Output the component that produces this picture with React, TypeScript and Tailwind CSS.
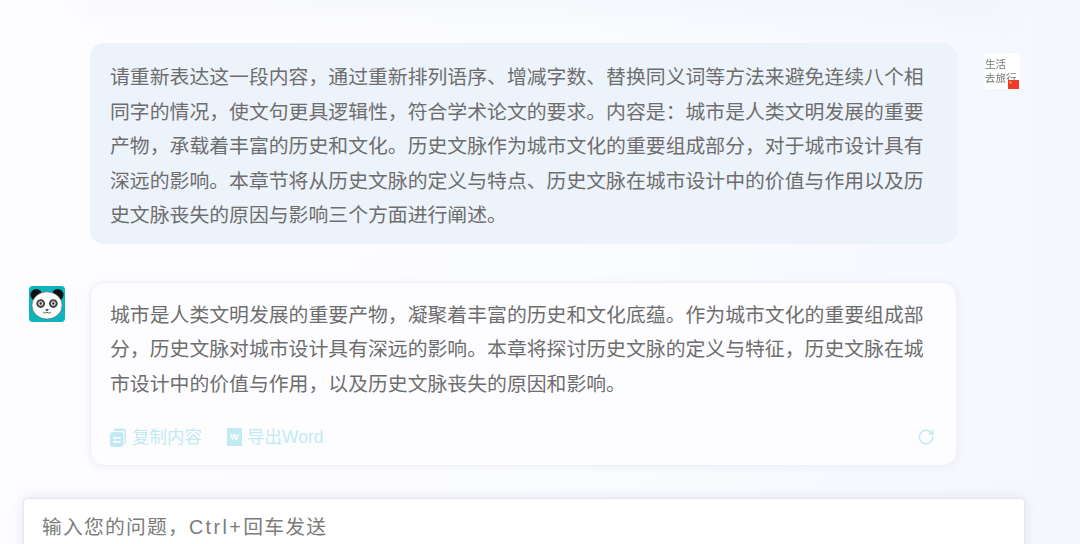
import { RotateCw } from "lucide-react";

const FONT = "font-['Liberation_Sans','Noto_Sans_CJK_SC',sans-serif]";

const PandaAvatar = () => (
  <svg width="36" height="36" viewBox="0 0 37 37" className="shrink-0">
    <rect width="37" height="37" rx="4" fill="#0cb4bc" />
    <circle cx="7.5" cy="9" r="6" fill="#111" />
    <circle cx="29.5" cy="9" r="6" fill="#111" />
    <ellipse cx="18.5" cy="20" rx="15.500" ry="14" fill="#fff" stroke="#555" strokeWidth="0.6" />
    <ellipse cx="12" cy="18" rx="4.500" ry="4.500" fill="#444" />
    <ellipse cx="25" cy="18" rx="4.500" ry="4.500" fill="#444" />
    <circle cx="12" cy="18" r="2.400" fill="#fff" />
    <circle cx="25" cy="18" r="2.400" fill="#fff" />
    <circle cx="12" cy="18" r="1.200" fill="#222" />
    <circle cx="25" cy="18" r="1.200" fill="#222" />
    <path d="M16.500 24h4l-2 2z" fill="#222" />
    <path d="M14.500 27q2 1.600 4 0q2 1.600 4 0" fill="none" stroke="#444" strokeWidth="0.8" />
  </svg>
);

const UserAvatar = () => (
  <div className="relative mt-[10px] flex h-[36px] w-[36px] shrink-0 flex-col items-start justify-center rounded bg-white pl-[1px] text-[10.500px] leading-[14px] text-[#777] blur-[0.6px]">
    <span>生活</span>
    <span>去旅行</span>
    <svg width="11" height="9" viewBox="0 0 11 9" className="absolute bottom-0 right-[1px]">
      <rect width="11" height="9" fill="#ee3b2c" />
      <circle cx="2.500" cy="2.500" r="1" fill="#f8d040" />
    </svg>
  </div>
);

const CopyIcon = () => (
  <svg width="16" height="19" viewBox="0 0 16 19">
    <path d="M3.500 2.500Q3.500 0.500 5.500 0.500H13q3 0 3 3v11q0 2-1.500 2V4.500q0-1.500-1.500-1.500H5Q3.500 3 3.500 2.500z" fill="#c3eaf3" />
    <rect x="0" y="4" width="13.500" height="15" rx="3" fill="#c3eaf3" />
    <rect x="3" y="9" width="7.500" height="1.800" fill="#fdfdff" />
    <rect x="3" y="13" width="7.500" height="1.800" fill="#fdfdff" />
  </svg>
);

const WordIcon = () => (
  <div className="flex h-[18px] w-[15px] items-center justify-center bg-[#c3eaf3] text-[9px] font-bold leading-none text-white">
    W
  </div>
);

export default function App() {
  return (
    <div className={`${FONT} flex h-[544px] w-[1080px] flex-col overflow-hidden bg-gradient-to-r from-[#fdfdff] via-[#fbfcff] to-[#f4f7fe]`}>
      <div className="mx-[90px] h-0 shadow-[0_0_28px_8px_rgba(225,228,238,0.35)]" />

      <div className="mt-[43px] flex items-start gap-[27px] pl-[90px]">
        <div className="w-[867px] rounded-[14px] bg-[#edf3fb] px-[20px] pb-[11px] pt-[17px] text-[19.85px] leading-[34.5px] text-[#6e6e6e]">
          请重新表达这一段内容，通过重新排列语序、增减字数、替换同义词等方法来避免连续八个相同字的情况，使文句更具逻辑性，符合学术论文的要求。内容是：城市是人类文明发展的重要产物，承载着丰富的历史和文化。历史文脉作为城市文化的重要组成部分，对于城市设计具有深远的影响。本章节将从历史文脉的定义与特点、历史文脉在城市设计中的价值与作用以及历史文脉丧失的原因与影响三个方面进行阐述。
        </div>
        <UserAvatar />
      </div>

      <div className="mt-[38px] flex items-start gap-[25px] pl-[29px]">
        <div className="mt-[4px]">
          <PandaAvatar />
        </div>
        <div className="h-[184px] w-[867px] rounded-[14px] border border-[#f1f2f7] bg-[#fdfdff] px-[19px] pt-[15px] shadow-[0_1px_6px_rgba(225,228,238,0.5)]">
          <div className="text-[19.85px] leading-[34.5px] text-[#6e6e6e]">
            城市是人类文明发展的重要产物，凝聚着丰富的历史和文化底蕴。作为城市文化的重要组成部分，历史文脉对城市设计具有深远的影响。本章将探讨历史文脉的定义与特征，历史文脉在城市设计中的价值与作用，以及历史文脉丧失的原因和影响。
          </div>
          <div className="mt-[24px] flex items-center text-[17.5px] leading-[24px] text-[#c3eaf3]">
            <CopyIcon />
            <span className="ml-[6px]">复制内容</span>
            <div className="ml-[25px]">
              <WordIcon />
            </div>
            <span className="ml-[5px]">导出Word</span>
            <RotateCw size={18} strokeWidth={2} className="ml-auto mr-[2px] text-[#c3eaf3]" />
          </div>
        </div>
      </div>

      <div className="mx-[23px] mt-[32px] h-[60px] w-[1002px] shrink-0 rounded-t border border-[#e6e7ec] bg-white px-[18px] pt-[12px] text-[19.8px] leading-[32px] tracking-[1.2px] text-[#7c7c7c] shadow-[0_0_12px_rgba(215,218,232,0.7)]">
        输入您的问题，<span className="tracking-[2.4px]">Ctrl+</span>回车发送
      </div>
    </div>
  );
}
